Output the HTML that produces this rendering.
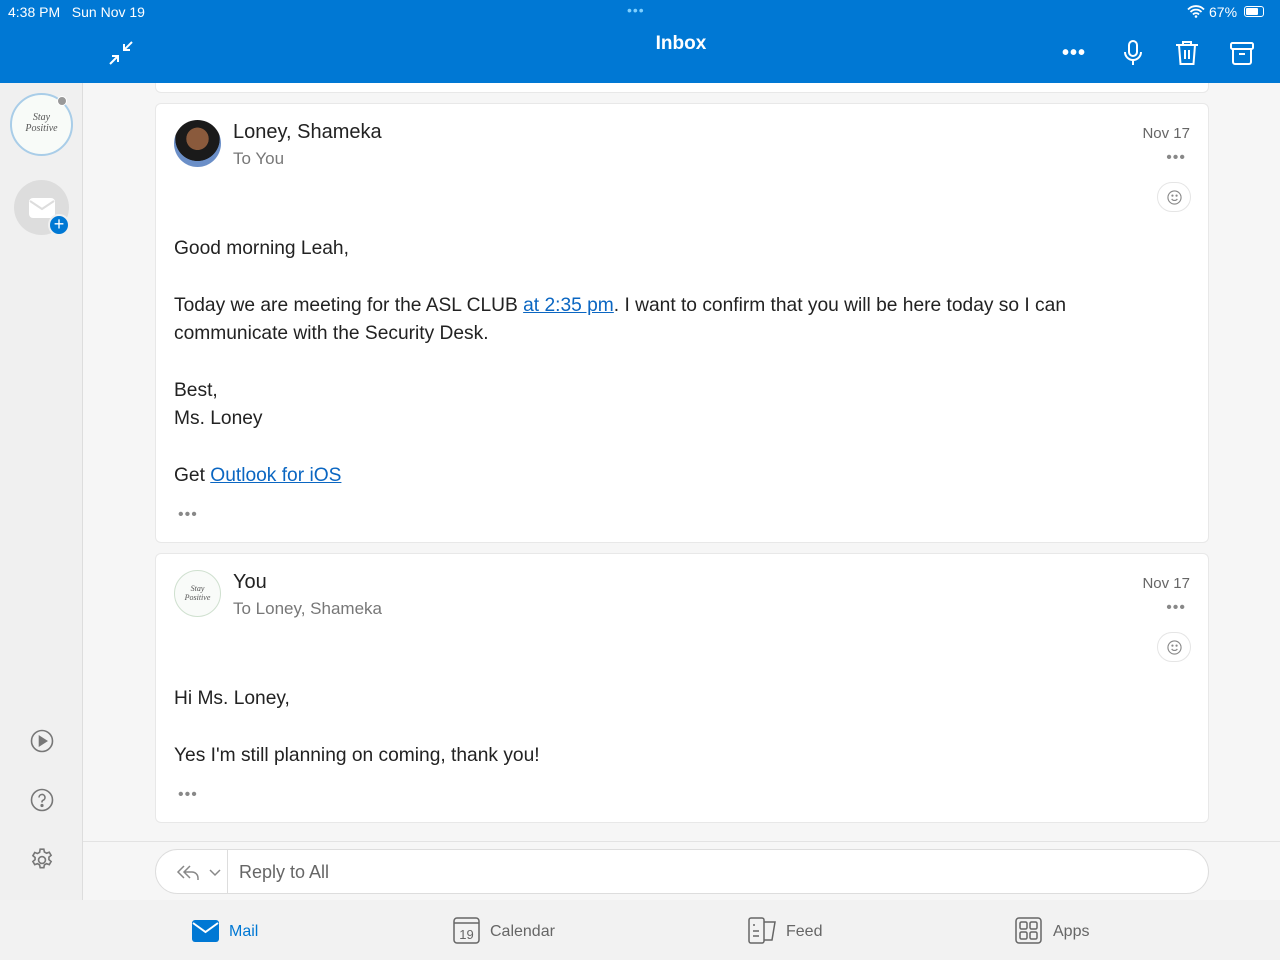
<!DOCTYPE html>
<html><head><meta charset="utf-8"><style>
*{margin:0;padding:0;box-sizing:border-box}
body{width:1280px;height:960px;overflow:hidden;font-family:"Liberation Sans",sans-serif;background:#f6f6f6;position:relative;color:#222}
.hdr{position:absolute;left:0;top:0;width:1280px;height:83px;background:#0078d4;color:#fff;z-index:5}
.side{position:absolute;left:0;top:83px;width:83px;height:817px;background:#f0f0f0;border-right:1px solid #ddd}
.card{position:absolute;left:155px;width:1054px;background:#fff;border:1px solid #e8e8e8;border-radius:6px}
.abs{position:absolute}
.name{font-size:20px;color:#222}
.sub{font-size:17px;color:#777}
.date{font-size:15px;color:#666}
.body{font-size:19.2px;line-height:28px;color:#222}
a{color:#0a66c2;text-decoration:underline}
.dots{font-size:16px;color:#888;letter-spacing:1px}
.emo{width:34px;height:30px;border:1px solid #e5e5e5;border-radius:16px}
.bot{position:absolute;left:0;top:900px;width:1280px;height:60px;background:#f2f2f2}
.tab{position:absolute;top:923px;font-size:16px;color:#666}
</style></head><body>
<div class="hdr">
<div class="abs" style="left:8px;top:4px;font-size:14px">4:38 PM&nbsp;&nbsp;&nbsp;Sun Nov 19</div>
<div class="abs" style="left:627px;top:2px;font-size:14px;color:#7fd0ff;letter-spacing:1px">•••</div>
<div class="abs" style="left:1209px;top:4px;font-size:14px">67%</div>
<div class="abs" style="left:1244px;top:6px;width:20px;height:11px;border:1px solid #fff;border-radius:3px;padding:1px"><div style="width:12px;height:7px;background:#fff;border-radius:1px"></div></div>
<svg class="abs" style="left:1187px;top:5px" width="18" height="13" viewBox="0 0 18 13"><path d="M1 4.5a11 11 0 0 1 16 0M3.5 7a7.5 7.5 0 0 1 11 0M6 9.5a4 4 0 0 1 6 0" stroke="#fff" stroke-width="1.8" fill="none"/><circle cx="9" cy="11.5" r="1.3" fill="#fff"/></svg>
<svg class="abs" style="left:108px;top:40px" width="26" height="26" viewBox="0 0 26 26" stroke="#fff" stroke-width="2" fill="none"><path d="M24 2l-8 8M16 4v6h6M2 24l8-8M4 16h6v6"/></svg>
<div class="abs" style="left:0;width:1362px;top:33px;text-align:center;font-size:19px;font-weight:bold">Inbox</div>
<div class="abs" style="left:1062px;top:42px;font-size:20px;letter-spacing:1px;font-weight:bold">•••</div>
<svg class="abs" style="left:1123px;top:40px" width="20" height="26" viewBox="0 0 20 26" stroke="#fff" stroke-width="2" fill="none"><rect x="6" y="1" width="8" height="15" rx="4"/><path d="M2 12a8 8 0 0 0 16 0M10 20v5"/></svg>
<svg class="abs" style="left:1175px;top:40px" width="24" height="26" viewBox="0 0 24 26" stroke="#fff" stroke-width="2" fill="none"><path d="M1 5h22M8 5V2h8v3M4 5l1.5 19h13L20 5M10 10v9M14 10v9"/></svg>
<svg class="abs" style="left:1230px;top:41px" width="24" height="24" viewBox="0 0 24 24" stroke="#fff" stroke-width="2" fill="none"><rect x="1" y="2" width="22" height="6" rx="1.5"/><path d="M3 8v13a2 2 0 0 0 2 2h14a2 2 0 0 0 2-2V8M9 13h6"/></svg>
</div>
<div class="side">
<div class="abs" style="left:10px;top:10px;width:63px;height:63px;border-radius:50%;border:2px solid #a9cde8;background:#f8fbf8;font:italic 10px 'Liberation Serif',serif;color:#555;text-align:center;padding-top:17px">Stay<br>Positive</div>
<div class="abs" style="left:57px;top:13px;width:10px;height:10px;border-radius:50%;background:#999;border:1px solid #fff"></div>
<div class="abs" style="left:14px;top:97px;width:55px;height:55px;border-radius:50%;background:#ddd"></div>
<svg class="abs" style="left:29px;top:115px" width="26" height="20" viewBox="0 0 26 20"><rect width="26" height="20" rx="4" fill="#fff"/><path d="M1 3l12 8 12-8" stroke="#ddd" stroke-width="2" fill="none"/></svg>
<div class="abs" style="left:48px;top:131px;width:22px;height:22px;border-radius:50%;background:#0078d4;border:2px solid #f0f0f0;color:#fff;font-size:18px;line-height:17px;text-align:center">+</div>
<svg class="abs" style="left:30px;top:646px" width="24" height="24" viewBox="0 0 24 24" fill="none" stroke="#777" stroke-width="1.6"><circle cx="12" cy="12" r="10.5"/><path d="M9.5 7.5l7 4.5-7 4.5z" fill="#777"/></svg>
<svg class="abs" style="left:30px;top:705px" width="24" height="24" viewBox="0 0 24 24" fill="none" stroke="#777" stroke-width="1.6"><circle cx="12" cy="12" r="10.5"/><path d="M9 9.5a3 3 0 1 1 4 2.8c-.7.3-1 .9-1 1.6v.6"/><circle cx="12" cy="17.5" r=".8" fill="#777"/></svg>
<svg class="abs" style="left:29px;top:764px" width="26" height="26" viewBox="0 0 24 24" fill="none" stroke="#777" stroke-width="1.5"><circle cx="12" cy="12" r="3.2"/><path d="M10.3 2h3.4l.5 2.6 2 1.1 2.5-.9 1.7 2.9-2 1.7v2.3l2 1.7-1.7 2.9-2.5-.9-2 1.1-.5 2.6h-3.4l-.5-2.6-2-1.1-2.5.9-1.7-2.9 2-1.7V9.7l-2-1.7 1.7-2.9 2.5.9 2-1.1z"/></svg>
</div>
<div class="card" style="top:60px;height:33px"></div>
<div class="card" style="top:103px;height:440px">
<div class="abs" style="left:18px;top:16px;width:47px;height:47px;border-radius:50%;background:radial-gradient(circle at 50% 40%,#8a5a3c 0 30%,#1a1a1a 31% 60%,#6b8fc8 61%)"></div>
<div class="abs name" style="left:77px;top:17px">Loney, Shameka</div>
<div class="abs sub" style="left:77px;top:45px">To You</div>
<div class="abs date" style="right:18px;top:21px">Nov 17</div>
<div class="abs dots" style="right:22px;top:45px">•••</div>
<div class="abs emo" style="right:17px;top:78px"><svg style="margin:7px 0 0 9px" width="15" height="15" viewBox="0 0 16 16" fill="none" stroke="#888" stroke-width="1.2"><circle cx="8" cy="8" r="7"/><path d="M5 9.5a3.5 3.5 0 0 0 6 0"/><circle cx="5.8" cy="6" r=".6" fill="#888"/><circle cx="10.2" cy="6" r=".6" fill="#888"/></svg></div>
<div class="abs body" style="left:18px;top:131px;width:915px">Good morning Leah,<br><div style="height:29px"></div>Today we are meeting for the ASL CLUB <a>at 2:35 pm</a>. I want to confirm that you will be here today so I can communicate with the Security Desk.<div style="height:29px"></div>Best,<br>Ms. Loney<div style="height:29px"></div>Get <a>Outlook for iOS</a></div>
<div class="abs dots" style="left:22px;top:402px">•••</div>
</div>
<div class="card" style="top:553px;height:270px">
<div class="abs" style="left:18px;top:16px;width:47px;height:47px;border-radius:50%;border:1px solid #cfe0cf;background:#f9fbf9;font:italic 8px 'Liberation Serif',serif;color:#555;text-align:center;padding-top:13px">Stay<br>Positive</div>
<div class="abs name" style="left:77px;top:17px">You</div>
<div class="abs sub" style="left:77px;top:45px">To Loney, Shameka</div>
<div class="abs date" style="right:18px;top:21px">Nov 17</div>
<div class="abs dots" style="right:22px;top:45px">•••</div>
<div class="abs emo" style="right:17px;top:78px"><svg style="margin:7px 0 0 9px" width="15" height="15" viewBox="0 0 16 16" fill="none" stroke="#888" stroke-width="1.2"><circle cx="8" cy="8" r="7"/><path d="M5 9.5a3.5 3.5 0 0 0 6 0"/><circle cx="5.8" cy="6" r=".6" fill="#888"/><circle cx="10.2" cy="6" r=".6" fill="#888"/></svg></div>
<div class="abs body" style="left:18px;top:131px">Hi Ms. Loney,<div style="height:29px"></div>Yes I'm still planning on coming, thank you!</div>
<div class="abs dots" style="left:22px;top:232px">•••</div>
</div>
<div class="abs" style="left:83px;top:841px;width:1197px;border-top:1px solid #e3e3e3"></div>
<div class="abs" style="left:155px;top:849px;width:1054px;height:45px;background:#fff;border:1px solid #ddd;border-radius:23px">
<svg class="abs" style="left:20px;top:13px" width="50" height="18" viewBox="0 0 50 18" fill="none" stroke="#888" stroke-width="1.5"><path d="M8 3L2 9l6 6M14 3L8 9l6 6M8 9h8a6 6 0 0 1 6 6v2M34 7l5 5 5-5"/></svg>
<div class="abs" style="left:71px;top:0;height:43px;border-left:1px solid #ddd"></div>
<div class="abs" style="left:83px;top:12px;font-size:18px;color:#666">Reply to All</div>
</div>
<div class="bot"></div>
<svg class="abs" style="left:192px;top:920px" width="27" height="22" viewBox="0 0 27 22"><rect width="27" height="22" rx="3" fill="#0078d4"/><path d="M1 3l12.5 9L26 3" stroke="#fff" stroke-width="2" fill="none"/></svg>
<div class="tab" style="left:229px;color:#0078d4">Mail</div>
<svg class="abs" style="left:453px;top:917px" width="27" height="27" viewBox="0 0 27 27" fill="none" stroke="#666" stroke-width="1.5"><rect x="1" y="1" width="25" height="25" rx="3"/><path d="M1 6h25"/><text x="13.5" y="22" font-size="13" text-anchor="middle" fill="#666" stroke="none" font-family="Liberation Sans">19</text></svg>
<div class="tab" style="left:490px">Calendar</div>
<svg class="abs" style="left:748px;top:917px" width="30" height="27" viewBox="0 0 30 27" fill="none" stroke="#666" stroke-width="1.5"><rect x="1" y="1" width="15" height="25" rx="2"/><path d="M16 5h11l-3 18h-8M5 8h2M5 14h6M5 19h6"/></svg>
<div class="tab" style="left:786px">Feed</div>
<svg class="abs" style="left:1015px;top:917px" width="27" height="27" viewBox="0 0 27 27" fill="none" stroke="#666" stroke-width="1.5"><rect x="1" y="1" width="25" height="25" rx="3"/><rect x="5" y="5" width="7" height="7" rx="1.5"/><rect x="15" y="5" width="7" height="7" rx="1.5"/><rect x="5" y="15" width="7" height="7" rx="1.5"/><rect x="15" y="15" width="7" height="7" rx="1.5"/></svg>
<div class="tab" style="left:1053px">Apps</div>
</body></html>
